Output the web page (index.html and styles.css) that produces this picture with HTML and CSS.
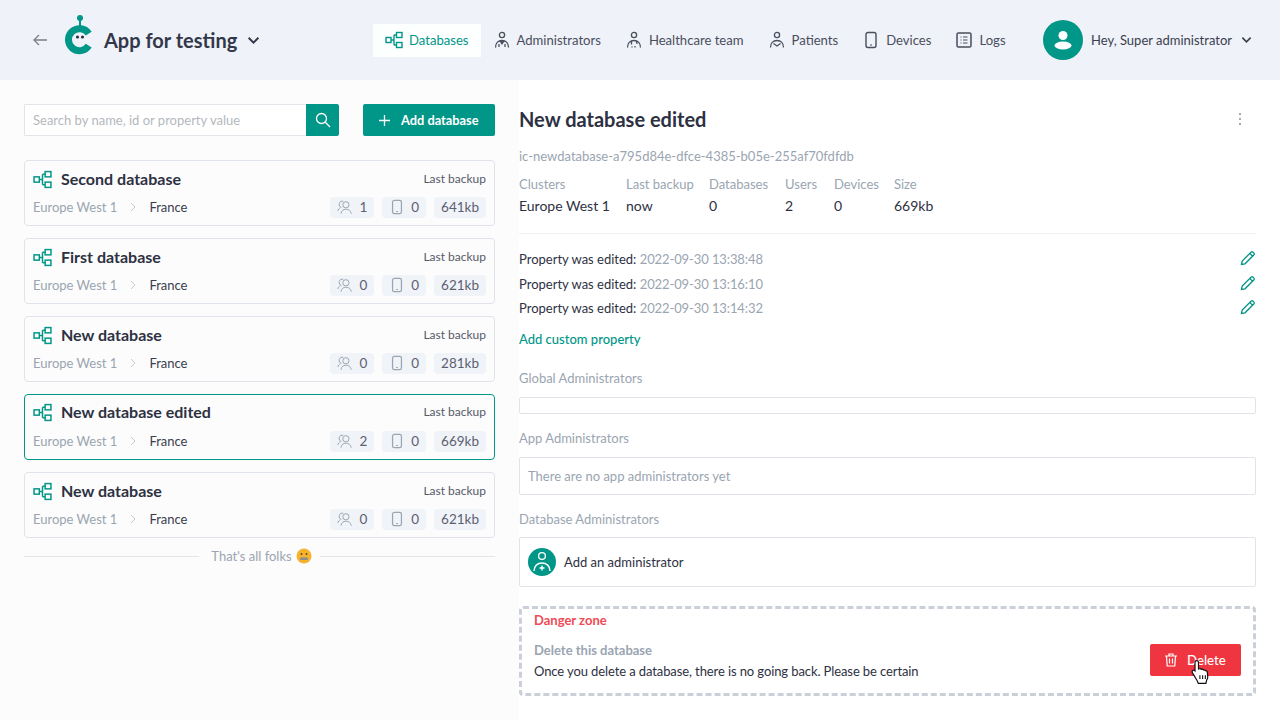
FILE: index.html
```html
<!DOCTYPE html>
<html lang="en">
<head>
    <meta charset="UTF-8">
    <title>App for testing</title>
    <link rel="stylesheet" href="styles.css">
</head>
<body>
    <svg class="sprites" width="0" height="0">
        <symbol id="i-db" viewBox="0 0 18 18">
            <g fill="none" stroke="currentColor" stroke-width="1.4">
                <rect x="1" y="6.500" width="5" height="5"/>
                <rect x="11.500" y="1.500" width="5.500" height="5"/>
                <rect x="11.500" y="11.500" width="5.500" height="5"/>
                <path d="M6 9h3M9 4v10M9 4h2.500M9 14h2.500"/>
            </g>
        </symbol>
        <symbol id="i-admin" viewBox="0 0 18 18">
            <g fill="none" stroke="currentColor" stroke-width="1.3">
                <circle cx="9" cy="4" r="2.600"/>
                <path d="M2.500 16.500c0-4 2.500-7 6.500-7s6.500 3 6.500 7M9 9.500v3M7 9.800l2 3 2-3M6 16v-3M12 16v-3"/>
            </g>
        </symbol>
        <symbol id="i-team" viewBox="0 0 18 18">
            <g fill="none" stroke="currentColor" stroke-width="1.3">
                <circle cx="9" cy="4" r="2.600"/>
                <path d="M2.500 16.500c0-4 2.500-7 6.500-7s6.500 3 6.500 7M6.500 10v3.500M11.500 10l.5 3M7 15.500v1M10 15v1.500"/>
            </g>
        </symbol>
        <symbol id="i-patient" viewBox="0 0 18 18">
            <g fill="none" stroke="currentColor" stroke-width="1.3">
                <circle cx="9" cy="4" r="2.600"/>
                <path d="M2.500 16.500c0-4 2.500-7 6.500-7s6.500 3 6.500 7M5.500 12.500l3.500 2.500 3.500-2.500"/>
            </g>
        </symbol>
        <symbol id="i-device" viewBox="0 0 18 18">
            <rect x="4" y="1.500" width="10" height="15" rx="2" fill="none" stroke="currentColor" stroke-width="1.400"/>
            <path d="M8 14h2" stroke="currentColor" stroke-width="1.200"/>
        </symbol>
        <symbol id="i-logs" viewBox="0 0 18 18">
            <rect x="2" y="2" width="14" height="14" rx="1.500" fill="none" stroke="currentColor" stroke-width="1.500"/>
            <path d="M5.500 6h1M8 6h4.500M5.500 9h1M8 9h4.500M5.500 12h1M8 12h4.500" stroke="currentColor" stroke-width="1.200"/>
        </symbol>
        <symbol id="i-users" viewBox="0 0 18 18">
            <g fill="none" stroke="currentColor" stroke-width="1.100">
                <circle cx="10" cy="6.500" r="3.500"/>
                <path d="M4.500 16.500c.5-3.500 2.500-5 5.500-5s5.500 1.500 6 5M5 9.500A3.600 3.600 0 0 1 7 2.500M1 13.500c.3-1.800 1.200-3 2.800-3.500"/>
            </g>
        </symbol>
        <symbol id="i-pencil" viewBox="0 0 16 16">
            <path d="M1.500 14.500l.7-3.500 8.800-8.800a1.500 1.500 0 0 1 2.100 0l.7.700a1.500 1.500 0 0 1 0 2.100L5 13.800zM9.800 3.400l2.800 2.800" fill="none" stroke="currentColor" stroke-width="1.300"/>
        </symbol>
        <symbol id="i-chevron" viewBox="0 0 12 8">
            <path d="M1.500 1.500L6 6l4.500-4.500" fill="none" stroke="currentColor" stroke-width="1.800"/>
        </symbol>
        <symbol id="i-sep" viewBox="0 0 6 10">
            <path d="M1 1l4 4-4 4" fill="none" stroke="currentColor" stroke-width="1"/>
        </symbol>
    </svg>

    <header class="topbar">
        <svg class="back" width="16" height="12" viewBox="0 0 16 12"><path d="M15 6H2M7 1L2 6l5 5" fill="none" stroke="#7b7f8a" stroke-width="1.300"/></svg>
        <svg class="logo" width="30" height="40" viewBox="0 0 30 40">
            <circle cx="15" cy="3" r="3" fill="#009688"/>
            <path d="M15 5v6" stroke="#009688" stroke-width="2"/>
            <path d="M23.700 18.700A11 11 0 1 0 23.700 30.700" fill="none" stroke="#009688" stroke-width="7"/>
            <circle cx="12.500" cy="22" r="1.600" fill="#2d3142"/>
            <circle cx="17.500" cy="22" r="1.600" fill="#2d3142"/>
        </svg>
        <div class="app-name">App for testing</div>
        <svg class="chevron-lg" width="13" height="9"><use href="#i-chevron"/></svg>

        <nav class="nav">
            <a class="nav-item active"><svg width="18" height="18"><use href="#i-db"/></svg>Databases</a>
            <a class="nav-item"><svg width="18" height="18"><use href="#i-admin"/></svg>Administrators</a>
            <a class="nav-item"><svg width="18" height="18"><use href="#i-team"/></svg>Healthcare team</a>
            <a class="nav-item"><svg width="18" height="18"><use href="#i-patient"/></svg>Patients</a>
            <a class="nav-item"><svg width="18" height="18"><use href="#i-device"/></svg>Devices</a>
            <a class="nav-item"><svg width="18" height="18"><use href="#i-logs"/></svg>Logs</a>
        </nav>

        <div class="user">
            <div class="avatar">
                <svg width="22" height="22" viewBox="0 0 22 22"><circle cx="11" cy="6.500" r="4.500" fill="#fff"/><ellipse cx="11" cy="16.500" rx="8.500" ry="4" fill="#fff"/></svg>
            </div>
            <span>Hey, Super administrator</span>
            <svg class="chevron-sm" width="11" height="8"><use href="#i-chevron"/></svg>
        </div>
    </header>

    <main class="content">
        <section class="left">
            <div class="toolbar">
                <div class="search">
                    <div class="search-input">Search by name, id or property value</div>
                    <div class="search-btn">
                        <svg width="16" height="16" viewBox="0 0 16 16"><circle cx="6.500" cy="6.500" r="5" fill="none" stroke="#fff" stroke-width="1.300"/><path d="M10.300 10.300L15 15" stroke="#fff" stroke-width="1.300"/></svg>
                    </div>
                </div>
                <button class="add-btn">
                    <svg width="11" height="11" viewBox="0 0 11 11"><path d="M5.500 0v11M0 5.500h11" stroke="#fff" stroke-width="1.300"/></svg>
                    Add database
                </button>
            </div>

            <div class="card">
                <div class="card-row">
                    <svg class="card-icon" width="19" height="19"><use href="#i-db"/></svg>
                    <div class="card-title">Second database</div>
                    <div class="backup">Last backup</div>
                </div>
                <div class="card-row">
                    <span class="cluster">Europe West 1</span><span class="sep"><svg width="6" height="10"><use href="#i-sep"/></svg></span><span class="country">France</span>
                    <div class="chips">
                        <span class="chip"><svg width="16" height="16"><use href="#i-users"/></svg>1</span>
                        <span class="chip"><svg width="16" height="16"><use href="#i-device"/></svg>0</span>
                        <span class="chip">641kb</span>
                    </div>
                </div>
            </div>
            <div class="card">
                <div class="card-row">
                    <svg class="card-icon" width="19" height="19"><use href="#i-db"/></svg>
                    <div class="card-title">First database</div>
                    <div class="backup">Last backup</div>
                </div>
                <div class="card-row">
                    <span class="cluster">Europe West 1</span><span class="sep"><svg width="6" height="10"><use href="#i-sep"/></svg></span><span class="country">France</span>
                    <div class="chips">
                        <span class="chip"><svg width="16" height="16"><use href="#i-users"/></svg>0</span>
                        <span class="chip"><svg width="16" height="16"><use href="#i-device"/></svg>0</span>
                        <span class="chip">621kb</span>
                    </div>
                </div>
            </div>
            <div class="card">
                <div class="card-row">
                    <svg class="card-icon" width="19" height="19"><use href="#i-db"/></svg>
                    <div class="card-title">New database</div>
                    <div class="backup">Last backup</div>
                </div>
                <div class="card-row">
                    <span class="cluster">Europe West 1</span><span class="sep"><svg width="6" height="10"><use href="#i-sep"/></svg></span><span class="country">France</span>
                    <div class="chips">
                        <span class="chip"><svg width="16" height="16"><use href="#i-users"/></svg>0</span>
                        <span class="chip"><svg width="16" height="16"><use href="#i-device"/></svg>0</span>
                        <span class="chip">281kb</span>
                    </div>
                </div>
            </div>
            <div class="card selected">
                <div class="card-row">
                    <svg class="card-icon" width="19" height="19"><use href="#i-db"/></svg>
                    <div class="card-title">New database edited</div>
                    <div class="backup">Last backup</div>
                </div>
                <div class="card-row">
                    <span class="cluster">Europe West 1</span><span class="sep"><svg width="6" height="10"><use href="#i-sep"/></svg></span><span class="country">France</span>
                    <div class="chips">
                        <span class="chip"><svg width="16" height="16"><use href="#i-users"/></svg>2</span>
                        <span class="chip"><svg width="16" height="16"><use href="#i-device"/></svg>0</span>
                        <span class="chip">669kb</span>
                    </div>
                </div>
            </div>
            <div class="card">
                <div class="card-row">
                    <svg class="card-icon" width="19" height="19"><use href="#i-db"/></svg>
                    <div class="card-title">New database</div>
                    <div class="backup">Last backup</div>
                </div>
                <div class="card-row">
                    <span class="cluster">Europe West 1</span><span class="sep"><svg width="6" height="10"><use href="#i-sep"/></svg></span><span class="country">France</span>
                    <div class="chips">
                        <span class="chip"><svg width="16" height="16"><use href="#i-users"/></svg>0</span>
                        <span class="chip"><svg width="16" height="16"><use href="#i-device"/></svg>0</span>
                        <span class="chip">621kb</span>
                    </div>
                </div>
            </div>

            <div class="end-line">
                <span>That's all folks</span>
                <svg width="16" height="16" viewBox="0 0 16 16">
                    <circle cx="8" cy="8" r="7.500" fill="#f5b32e"/>
                    <circle cx="5.500" cy="6" r="1" fill="#6b4a1c"/>
                    <circle cx="10.500" cy="6" r="1" fill="#6b4a1c"/>
                    <rect x="4" y="9.500" width="8" height="2.500" rx="1" fill="#8d8d8d"/>
                </svg>
            </div>
        </section>

        <section class="detail">
            <div class="detail-head">
                <h1>New database edited</h1>
                <svg width="4" height="14" viewBox="0 0 4 14"><path d="M1 1h2v2H1zM1 6h2v2H1zM1 11h2v2H1z" fill="#aaa"/></svg>
            </div>
            <div class="db-id">ic-newdatabase-a795d84e-dfce-4385-b05e-255af70fdfdb</div>

            <div class="stats">
                <span class="stat-label">Clusters</span>
                <span class="stat-label">Last backup</span>
                <span class="stat-label">Databases</span>
                <span class="stat-label">Users</span>
                <span class="stat-label">Devices</span>
                <span class="stat-label">Size</span>
                <span>Europe West 1</span>
                <span>now</span>
                <span>0</span>
                <span>2</span>
                <span>0</span>
                <span>669kb</span>
            </div>

            <div class="properties">
                <div class="prop">Property was edited:&nbsp;<span class="prop-date">2022-09-30 13:38:48</span><svg width="16" height="16"><use href="#i-pencil"/></svg></div>
                <div class="prop">Property was edited:&nbsp;<span class="prop-date">2022-09-30 13:16:10</span><svg width="16" height="16"><use href="#i-pencil"/></svg></div>
                <div class="prop">Property was edited:&nbsp;<span class="prop-date">2022-09-30 13:14:32</span><svg width="16" height="16"><use href="#i-pencil"/></svg></div>
            </div>
            <a class="custom-link">Add custom property</a>

            <div class="field-label first">Global Administrators</div>
            <div class="field field-empty"></div>

            <div class="field-label">App Administrators</div>
            <div class="field field-text">There are no app administrators yet</div>

            <div class="field-label">Database Administrators</div>
            <div class="field field-add">
                <div class="add-avatar">
                    <svg width="20" height="22" viewBox="0 0 20 22" fill="none" stroke="#fff" stroke-width="1.400"><circle cx="10" cy="5" r="3.400"/><path d="M2 20c0-5 3.500-8 8-8s8 3 8 8"/><path d="M10 14.500v5M7.500 17h5"/></svg>
                </div>
                <span>Add an administrator</span>
            </div>

            <div class="danger">
                <div class="danger-title">Danger zone</div>
                <div class="danger-row">
                    <div>
                        <div class="danger-sub">Delete this database</div>
                        <div class="danger-text">Once you delete a database, there is no going back. Please be certain</div>
                    </div>
                    <button class="delete-btn">
                        <svg width="14" height="14" viewBox="0 0 14 14" fill="none" stroke="#fff" stroke-width="1.200"><path d="M1 3h12M5 3V1h4v2M2.500 3l.7 10h7.600l.7-10M5.500 5.500v5M8.500 5.500v5"/></svg>
                        Delete
                        <svg class="cursor" width="20" height="25" viewBox="0 0 18 23"><path d="M5 1.500c1 0 1.700.7 1.700 1.700v6l1-.2c.7-.2 1.300 0 1.600.5.700-.4 1.500-.2 1.900.5.700-.3 1.500 0 1.800.7.900-.2 1.700.5 1.800 1.400l.4 4c.1 1.300-.3 2.400-1 3.400l-.7 3H6.500l-1-2.500L1.300 13c-.6-.8-.5-1.800.1-2.300.7-.5 1.500-.4 2 .1l.1.100V3.200C3.500 2.200 4 1.500 5 1.500z" fill="#fff" stroke="#111" stroke-width="1.100"/><path d="M8 15v3.500M10.500 15v3.500M13 15v3.500" stroke="#111" stroke-width="1"/></svg>
                    </button>
                </div>
            </div>
        </section>
    </main>
</body>
</html>
```

FILE: styles.css
```css
* {
    box-sizing: border-box;
}

html, body {
    height: 100%;
}

body {
    margin: 0;
    overflow: hidden;
    background: #fff;
    color: #2d3142;
    font-family: Lato, "Liberation Sans", sans-serif;
    font-size: 13px;
    line-height: 20px;
}

.sprites {
    display: block;
    height: 0;
}

/* top bar */
.topbar {
    display: flex;
    align-items: center;
    height: 80px;
    padding: 0 28px 0 32px;
    background: #eff2f8;
}

.topbar svg {
    flex: none;
}

.logo {
    margin: 0 9px 10px 17px;
}

.app-name {
    flex: none;
    width: 133px;
    font-size: 20px;
    font-weight: 700;
    color: #33374a;
    white-space: nowrap;
}

.chevron-lg {
    margin-left: 10px;
    color: #33374a;
}

.nav {
    display: flex;
    align-items: center;
    margin-left: 113px;
}

.nav-item {
    display: flex;
    align-items: center;
    gap: 6px;
    height: 33px;
    padding: 0 12px;
    color: #4a4e5e;
    font-size: 13.100px;
    white-space: nowrap;
}

.nav-item.active {
    background: #fdfefe;
    color: #009688;
}

.user {
    display: flex;
    align-items: center;
    margin-left: auto;
    color: #3a3e4f;
    white-space: nowrap;
}

.avatar {
    display: flex;
    align-items: center;
    justify-content: center;
    width: 40px;
    height: 40px;
    margin-right: 8px;
    border-radius: 50%;
    background: #009688;
}

.chevron-sm {
    margin-left: 9px;
}

/* left column */
.content {
    display: flex;
    height: 640px;
}

.left {
    flex: none;
    width: 519px;
    padding: 24px 24px 0;
    background: #fcfcfc;
}

.toolbar {
    display: flex;
    justify-content: space-between;
    margin-bottom: 24px;
}

.search {
    display: flex;
    width: 315px;
    height: 32px;
}

.search-input {
    flex: 1;
    padding: 5px 8px;
    border: 1px solid #e2e6ea;
    border-right: 0;
    border-radius: 2px 0 0 2px;
    background: #fff;
    color: #b4b8bd;
}

.search-btn {
    display: flex;
    align-items: center;
    justify-content: center;
    width: 33px;
    border-radius: 0 2px 2px 0;
    background: #009688;
}

.add-btn {
    display: flex;
    align-items: center;
    gap: 11px;
    width: 132px;
    height: 32px;
    padding: 0 0 0 16px;
    border: 0;
    border-radius: 2px;
    background: #009688;
    color: #fff;
    font: 700 12.800px/20px Lato, sans-serif;
}

.card {
    height: 66px;
    margin-bottom: 12px;
    padding: 8px 8px 0;
    border: 1px solid #dfe4ea;
    border-radius: 4px;
}

.card.selected {
    border-color: #009688;
}

.card-row {
    display: flex;
    align-items: center;
    height: 20px;
}

.card-row + .card-row {
    height: 22px;
    margin-top: 7px;
}

.card.selected .card-row {
    height: 18px;
}

.card.selected .card-row + .card-row {
    height: 22px;
    margin-top: 9px;
}

.card-icon {
    flex: none;
    color: #009688;
    margin-right: 9px;
}

.card-title {
    font-size: 16px;
    font-weight: 700;
    color: #2d3142;
}

.backup {
    margin-left: auto;
    font-size: 12px;
    color: #565a68;
}

.cluster {
    color: #9aa5b1;
}

.sep {
    display: flex;
    justify-content: center;
    width: 32px;
    color: #c4cad2;
}

.country {
    color: #3a3e4f;
}

.chips {
    display: flex;
    gap: 8px;
    margin-left: auto;
}

.chip {
    display: flex;
    align-items: center;
    gap: 6px;
    height: 21px;
    padding: 0 7px;
    border-radius: 4px;
    background: #f0f3f8;
    color: #5c6070;
    font-size: 13.500px;
}

.chip svg {
    color: #9aa5b1;
}

.end-line {
    display: flex;
    align-items: center;
    gap: 4px;
    margin-top: -4px;
    color: #9aa5b1;
}

.end-line::before, .end-line::after {
    content: "";
    flex: 1;
    height: 1px;
    background: #e2e6ea;
}

.end-line::before {
    margin-right: 8px;
}

.end-line::after {
    margin-left: 4px;
}

/* detail column */
.detail {
    flex: 1;
    padding: 24px 24px 0 0;
    background: #fff;
}

.detail-head {
    display: flex;
    align-items: center;
    justify-content: space-between;
    height: 30px;
    padding-right: 14px;
}

h1 {
    margin: 0;
    font-size: 20px;
    font-weight: 700;
    color: #2d3142;
}

.db-id {
    margin-top: 12px;
    font-size: 13px;
    color: #9aa5b1;
}

.stats {
    display: grid;
    grid-template-columns: 91px 67px 60px 33px 44px auto;
    column-gap: 16px;
    row-gap: 2px;
    padding: 8px 0 17px;
    border-bottom: 1px solid #f3f3f3;
    font-size: 14px;
}

.stat-label {
    font-size: 13px;
    color: #9aa5b1;
    white-space: nowrap;
}

.properties {
    margin-top: 13px;
}

.prop {
    display: flex;
    align-items: center;
    height: 24.500px;
}

.prop svg {
    margin-top: -2px;
    margin-left: auto;
    color: #009688;
}

.prop-date {
    color: #9aa5b1;
    letter-spacing: -0.1px;
}

.custom-link {
    display: block;
    margin-top: 8px;
    font-weight: 500;
    color: #009688;
}

.field-label {
    margin-top: 14px;
    color: #9aa5b1;
}

.field-label.first {
    margin-top: 19px;
}

.field {
    margin-top: 9px;
    border: 1px solid #dfe4ea;
    border-radius: 2px;
}

.field-empty {
    height: 17px;
}

.field-text {
    height: 38px;
    padding: 8px;
    color: #9aa5b1;
}

.field-add {
    display: flex;
    align-items: center;
    gap: 8px;
    height: 50px;
    margin-top: 8px;
    padding: 0 8px;
}

.add-avatar {
    display: flex;
    align-items: center;
    justify-content: center;
    width: 28px;
    height: 28px;
    border-radius: 50%;
    background: #009688;
}

.danger {
    height: 90px;
    margin-top: 19px;
    padding: 1px 12px;
    border: 3px dashed #cbd0d8;
    border-radius: 4px;
}

.danger-title {
    font-weight: 700;
    color: #ef4a55;
}

.danger-row {
    display: flex;
    align-items: center;
    justify-content: space-between;
    margin-top: 10px;
}

.danger-sub {
    font-weight: 700;
    color: #9aa5b1;
}

.danger-text {
    margin-top: 1px;
    letter-spacing: -0.1px;
}

.delete-btn {
    position: relative;
    display: flex;
    align-items: center;
    gap: 9px;
    width: 91px;
    height: 32px;
    margin-top: 0;
    padding: 0 14px;
    border: 0;
    border-radius: 2px;
    background: #ef3640;
    color: #fff;
    font: 500 13.200px/20px Lato, sans-serif;
}

.cursor {
    position: absolute;
    left: 41px;
    top: 15px;
}
```
